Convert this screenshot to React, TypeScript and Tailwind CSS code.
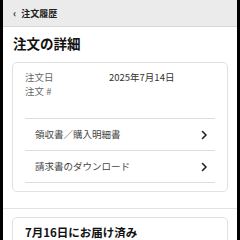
import React from 'react';

const Chevron = () => (
  <svg width="8" height="10" viewBox="0 0 8 10" fill="none" stroke="#222" strokeWidth={1.6} strokeLinecap="round" strokeLinejoin="round">
    <path d="M2.5 1.5L6 5l-3.5 3.5" />
  </svg>
);

const links = ['領収書／購入明細書', '請求書のダウンロード'];

export default function App() {
  return (
    <div
      className="w-[240px] h-[240px] overflow-hidden bg-black px-[3px]"
      style={{ fontFamily: '"Noto Sans CJK JP", "Noto Sans", sans-serif' }}
    >
      <div className="h-full bg-white">
        {/* Header */}
        <div className="h-[27px] bg-[#ebebeb] border-b border-[#d6d6d6] flex items-center pl-[10px] gap-[5px]">
          <span className="text-[10px] font-bold text-[#222] leading-none">‹</span>
          <span className="text-[9px] font-bold text-[#222] leading-none">注文履歴</span>
        </div>

        <h1 className="pt-[7px] pl-[10px] text-[13.5px] font-bold text-[#111] leading-[18px]">注文の詳細</h1>

        {/* Order card */}
        <div className="mt-[10px] mx-[9px] border border-[#e2e2e2] rounded-[5px] px-[12px] pt-[7px] pb-[8px]">
          <div className="grid grid-cols-[84px_1fr] text-[9.5px] leading-[14px] text-[#666]">
            <span>注文日</span>
            <span className="text-[#333]">2025年7月14日</span>
            <span>注文 #</span>
            <span />
          </div>
          <div className="mt-[20px] border-t border-[#dcdcdc]">
            {links.map((l) => (
              <div key={l} className="h-[32px] flex items-center justify-between pl-[10px] pr-[7px] border-b border-[#dcdcdc]">
                <span className="text-[9.5px] text-[#444]">{l}</span>
                <Chevron />
              </div>
            ))}
          </div>
        </div>

        <div className="mt-[16px] border-t border-[#e2e2e2]" />

        {/* Delivery card */}
        <div className="mt-[8px] mx-[9px] border border-[#e2e2e2] rounded-[5px] px-[12px] pt-[6px] h-[40px]">
          <p className="text-[11.5px] leading-[16px] font-bold text-[#111]">7月16日にお届け済み</p>
        </div>
      </div>
    </div>
  );
}
